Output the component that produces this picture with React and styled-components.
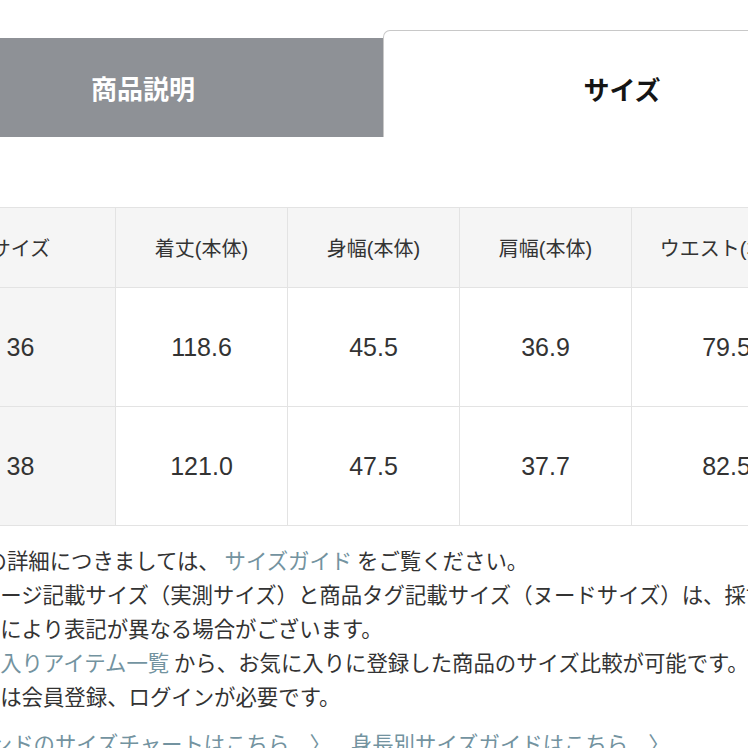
import React from 'react';
import styled, { createGlobalStyle } from 'styled-components';

const GlobalStyle = createGlobalStyle`
  html, body {
    margin: 0;
    padding: 0;
    background: #ffffff;
    overflow: hidden;
  }
  body {
    font-family: "Liberation Sans", "Noto Sans CJK JP", sans-serif;
    color: #333333;
  }
`;

const Page = styled.div`
  width: 748px;
  height: 748px;
  overflow: hidden;
`;

const TabBar = styled.div`
  display: flex;
  align-items: flex-end;
  margin-left: -97px;
  padding-top: 30px;
  width: 958px;
`;

const Tab = styled.div`
  flex: 0 0 ${(p) => (p.$active ? '478px' : '480px')};
  box-sizing: border-box;
  display: flex;
  align-items: center;
  justify-content: center;
  height: ${(p) => (p.$active ? '107px' : '99px')};
  padding-top: ${(p) => (p.$active ? '9px' : '0')};
  background: ${(p) => (p.$active ? '#ffffff' : '#8e9196')};
  color: ${(p) => (p.$active ? '#151515' : '#ffffff')};
  border: ${(p) => (p.$active ? '1px solid #c8c8c8' : 'none')};
  border-bottom: none;
  border-radius: ${(p) => (p.$active ? '7px 7px 0 0' : '0')};
  font-family: "Noto Sans CJK JP", sans-serif;
  font-size: 26px;
  font-weight: 700;
`;

const Table = styled.table`
  margin-top: 70px;
  margin-left: -75px;
  border-collapse: collapse;
  table-layout: fixed;
  width: 896px;
`;

const Cell = styled.td`
  border: 1px solid #e3e3e3;
  text-align: center;
  vertical-align: middle;
  padding: 0;
  height: ${(p) => (p.$head ? '79px' : '118px')};
  background: ${(p) => (p.$head || p.$first ? '#f5f5f5' : '#ffffff')};
  font-size: ${(p) => (p.$head ? '20px' : '25px')};
  font-weight: 400;
  color: #333333;
  white-space: nowrap;
  overflow: hidden;
`;

const Notes = styled.div`
  margin-top: 17px;
  margin-left: -64px;
  font-family: "Noto Sans CJK JP", sans-serif;
  font-size: 21.4px;
  line-height: 34px;
  color: #333333;
  white-space: nowrap;
`;

const Line = styled.div`
  margin-left: ${(p) => p.$indent || 0}px;
  margin-top: ${(p) => p.$gap || 0}px;
`;

const LinkRow = styled(Line)`
  display: flex;
  gap: 20px;
  color: #7393a0;
`;

const Link = styled.span`
  color: #7393a0;
`;

const columns = [190, 172, 172, 172, 190];
const heads = ['サイズ', '着丈(本体)', '身幅(本体)', '肩幅(本体)', 'ウエスト(本体)'];
const rows = [
  ['36', '118.6', '45.5', '36.9', '79.5'],
  ['38', '121.0', '47.5', '37.7', '82.5'],
];

export default function App() {
  return (
    <Page>
      <GlobalStyle />
      <TabBar>
        <Tab>商品説明</Tab>
        <Tab $active>サイズ</Tab>
      </TabBar>

      <Table>
        <colgroup>
          {columns.map((w, i) => (
            <col key={i} style={{ width: w }} />
          ))}
        </colgroup>
        <tbody>
          <tr>
            {heads.map((h) => (
              <Cell as="th" key={h} $head>
                {h}
              </Cell>
            ))}
          </tr>
          {rows.map((r) => (
            <tr key={r[0]}>
              {r.map((v, i) => (
                <Cell key={i} $first={i === 0}>
                  {v}
                </Cell>
              ))}
            </tr>
          ))}
        </tbody>
      </Table>

      <Notes>
        <Line $indent={-14}>
          サイズの詳細につきましては、 <Link>サイズガイド</Link> をご覧ください。
        </Line>
        <Line>商品ページ記載サイズ（実測サイズ）と商品タグ記載サイズ（ヌードサイズ）は、採寸方法の</Line>
        <Line>の違いにより表記が異なる場合がございます。</Line>
        <Line>
          <Link>お気に入りアイテム一覧</Link> から、お気に入りに登録した商品のサイズ比較が可能です。
        </Line>
        <Line>本機能は会員登録、ログインが必要です。</Line>
        <LinkRow $gap={13} $indent={12}>
          <span>ブランドのサイズチャートはこちら</span>
          <span>〉</span>
          <span>身長別サイズガイドはこちら</span>
          <span>〉</span>
        </LinkRow>
      </Notes>
    </Page>
  );
}
